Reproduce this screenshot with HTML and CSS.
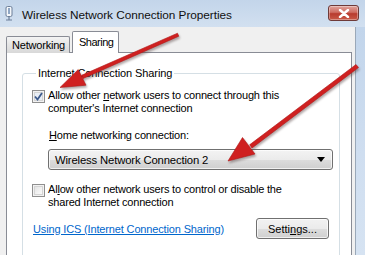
FILE: index.html
```html
<!DOCTYPE html>
<html>
<head>
<meta charset="utf-8">
<link rel="stylesheet" href="styles.css">
</head>
<body>
<div class="window">
  <div class="titlebar">
    <svg class="app-icon" width="10" height="16" viewBox="0 0 10 16">
      <rect x="2" y="0.5" width="6" height="10" rx="1.5" fill="#f4f7fb" stroke="#6d7f99"/>
      <rect x="4" y="2" width="2" height="6" fill="#8fa6c4"/>
      <path d="M5 11v3M2 14h6" stroke="#6d7f99" stroke-width="1.2"/>
    </svg>
    <span class="title">Wireless Network Connection Properties</span>
    <div class="close-btn">
      <svg width="12" height="9" viewBox="0 0 12 9"><path d="M2 1l8 7M10 1l-8 7" stroke="#fff" stroke-width="2.4" stroke-linecap="round"/></svg>
    </div>
  </div>
  <div class="client">
    <div class="tabs">
      <div class="tab">Networking</div>
      <div class="tab active">Sharing</div>
    </div>
    <div class="panel">
      <fieldset class="group">
        <legend>Internet Connection Sharing</legend>
        <div class="check-row">
          <span class="checkbox checked">
            <svg width="9" height="9" viewBox="0 0 9 9"><path d="M1 4.5l2.5 3L8 1" fill="none" stroke="#3d5a8c" stroke-width="1.8"/></svg>
          </span>
          <span class="check-label">Allow other <u>n</u>etwork users to connect through this computer's Internet connection</span>
        </div>
        <div class="sub">
          <div class="field-label"><u>H</u>ome networking connection:</div>
          <div class="combo">
            <span>Wireless Network Connection 2</span>
            <span class="combo-arrow"></span>
          </div>
        </div>
        <div class="check-row second">
          <span class="checkbox"></span>
          <span class="check-label">Al<u>l</u>ow other network users to control or disable the shared Internet connection</span>
        </div>
        <div class="bottom-row">
          <a class="link" href="#">Using ICS (Internet Connection Sharing)</a>
          <button class="btn">Setti<u>n</u>gs...</button>
        </div>
      </fieldset>
    </div>
  </div>
  <div class="frame-right"></div>
  <svg class="arrows" width="365" height="255" viewBox="0 0 365 255">
    <g fill="#cf2020" stroke="#b01818" stroke-width="0.6">
      <path d="M177.5 33.2 L178.8 36.2 L83 78.5 L81.5 75.3 Z"/>
      <path d="M60 87.5 L78.2 69.6 L86 85.2 Z"/>
      <path d="M356 64.5 L358.5 67.5 L252 148 L249.6 144.8 Z"/>
      <path d="M228 161 L242.5 137.5 L255 154 Z"/>
    </g>
  </svg>
</div>
</body>
</html>
```

FILE: styles.css
```css
* { box-sizing: border-box; }
html, body { margin: 0; padding: 0; }
body {
  width: 365px;
  height: 255px;
  overflow: hidden;
  font-family: "Liberation Sans", Arial, sans-serif;
  font-size: 11px;
  color: #000;
}
.window {
  position: relative;
  width: 365px;
  height: 255px;
  overflow: hidden;
  display: grid;
  grid-template-columns: 356px 9px;
  grid-template-rows: 27px 228px;
  background: linear-gradient(180deg, #bfd3ea 0%, #cfdef0 60%, #d6e3f2 100%);
}
.titlebar {
  grid-column: 1 / 3;
  display: flex;
  align-items: center;
  padding: 2px 7px 0 4px;
  background: linear-gradient(180deg, #c3d5ea 0%, #d2e0f0 100%);
}
.app-icon { margin-right: 8px; margin-top: -1px; }
.title {
  font-size: 11.8px;
  letter-spacing: -0.05px;
  color: #101010;
  flex: 1;
  padding-top: 1px;
}
.close-btn {
  width: 31px;
  height: 16px;
  margin-top: -3px;
  margin-right: -1px;
  border: 1px solid #6e3a38;
  border-radius: 3px;
  background: linear-gradient(180deg, #e0a49c 0%, #cf6d62 45%, #b83b2e 55%, #c85a48 100%);
  box-shadow: inset 0 0 0 1px rgba(255,255,255,0.35);
  display: flex;
  align-items: center;
  justify-content: center;
}
.client {
  grid-column: 1;
  grid-row: 2;
  background: #f0f0f0;
  border-right: 1px solid #9aa8b8;
  padding: 5px 3px 0 6px;
  display: flex;
  flex-direction: column;
  overflow: hidden;
}
.frame-right {
  grid-column: 2;
  grid-row: 2;
}
.tabs {
  display: flex;
  align-items: flex-end;
  height: 21px;
  flex: none;
  position: relative;
  z-index: 1;
  margin-bottom: -1px;
}
.tab {
  height: 17px;
  padding: 2px 4px 0 5px;
  border: 1px solid #898c95;
  border-bottom: none;
  border-radius: 2px 2px 0 0;
  background: linear-gradient(180deg, #f4f4f4 0%, #e4e4e4 50%, #d8d8d8 100%);
  font-size: 11px;
  letter-spacing: -0.2px;
  margin-right: -1px;
}
.tab.active {
  height: 22px;
  padding: 4px 5px 0 6px;
  margin-left: 3px;
  background: #fff;
  letter-spacing: -0.5px;
  font-size: 11px;
}
.panel {
  flex: 1;
  background: #fff;
  border: 1px solid #898c95;
  padding: 14px 11px 0 15px;
}
.group {
  margin: 0;
  padding: 9px 0 0 9px;
  border: 1px solid #d5dfe5;
  border-radius: 3px;
  height: 220px;
  min-width: 0;
}
.group legend {
  padding: 0 2px;
  margin-left: 4px;
  font-size: 11px;
  letter-spacing: -0.1px;
  line-height: 13px;
}
.check-row {
  display: flex;
  align-items: flex-start;
  line-height: 13px;
  letter-spacing: -0.19px;
}
.check-row.second { margin-top: 13px; }
.checkbox {
  flex: none;
  width: 13px;
  height: 13px;
  margin: 1px 2px 0 0;
  border: 1px solid #8f8f8f;
  background: linear-gradient(135deg, #dcdcdc 0%, #f4f4f4 60%, #fdfdfd 100%);
  box-shadow: inset 0 0 0 1px #f2f2f2, inset 0 0 0 2px #d4d4d4;
  display: flex;
  align-items: center;
  justify-content: center;
}
.checkbox.checked { background: #e8eef6; }
.check-label { width: 240px; padding-left: 1px; }
.sub { padding: 14px 0 0 16px; }
.field-label {
  letter-spacing: -0.19px;
  line-height: 13px;
  padding-left: 1px;
}
.combo {
  margin-top: 7px;
  width: 285px;
  height: 21px;
  border: 1px solid #707070;
  border-radius: 3px;
  background: linear-gradient(180deg, #f3f3f3 0%, #ebebeb 50%, #dddddd 51%, #cfcfcf 100%);
  box-shadow: inset 0 0 0 1px rgba(255,255,255,0.7);
  display: flex;
  align-items: center;
  justify-content: space-between;
  padding: 0 7px 0 6px;
  letter-spacing: -0.15px;
  font-size: 11.3px;
}
.combo-arrow {
  width: 0;
  height: 0;
  border-left: 4px solid transparent;
  border-right: 4px solid transparent;
  border-top: 5px solid #000;
}
.bottom-row {
  display: flex;
  justify-content: space-between;
  align-items: center;
  margin-top: 9px;
  padding-right: 10px;
}
.link {
  color: #0066cc;
  text-decoration: underline;
  letter-spacing: -0.15px;
  margin-left: 1px;
  font-size: 11px;
}
.btn {
  width: 73px;
  height: 21px;
  border: 1px solid #707070;
  border-radius: 3px;
  background: linear-gradient(180deg, #f2f2f2 0%, #ebebeb 50%, #dddddd 51%, #cfcfcf 100%);
  box-shadow: inset 0 0 0 1px rgba(255,255,255,0.7);
  font-family: "Liberation Sans", Arial, sans-serif;
  font-size: 11px;
  color: #000;
  padding: 0;
}
.arrows {
  position: absolute;
  left: 0;
  top: 0;
  pointer-events: none;
  filter: drop-shadow(1px 2px 1px rgba(80, 60, 60, 0.45));
}
```
